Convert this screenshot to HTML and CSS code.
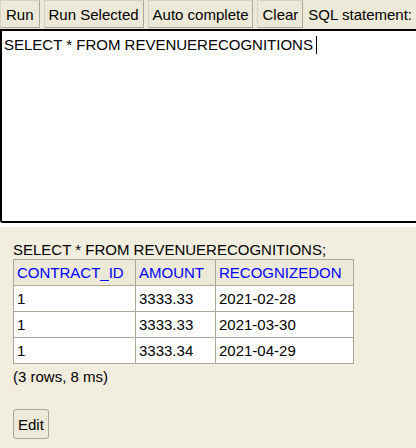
FILE: index.html
```html
<!DOCTYPE html>
<html>
<head>
<meta charset="utf-8">
<link rel="stylesheet" href="styles.css">
</head>
<body>
<div class="toolbar">
  <button class="btn">Run</button>
  <button class="btn">Run Selected</button>
  <button class="btn">Auto complete</button>
  <button class="btn">Clear</button>
  <span class="label">SQL statement:</span>
</div>
<div class="editor"><span class="sql">SELECT * FROM REVENUERECOGNITIONS</span><span class="caret"></span></div>
<div class="result">
  <div class="stmt">SELECT * FROM REVENUERECOGNITIONS;</div>
  <table class="grid">
    <tr><th class="c1">CONTRACT_ID</th><th class="c2">AMOUNT</th><th class="c3">RECOGNIZEDON</th></tr>
    <tr><td>1</td><td>3333.33</td><td>2021-02-28</td></tr>
    <tr><td>1</td><td>3333.33</td><td>2021-03-30</td></tr>
    <tr><td>1</td><td>3333.34</td><td>2021-04-29</td></tr>
  </table>
  <div class="info">(3 rows, 8 ms)</div>
  <button class="edit">Edit</button>
</div>
</body>
</html>
```
FILE: styles.css
```css
html, body {
  margin: 0;
  padding: 0;
  background: #ffffff;
  font-family: "Liberation Sans", Arial, sans-serif;
  font-size: 15px;
  color: #000;
  overflow: hidden;
}
body {
  height: 448px;
  display: flex;
  flex-direction: column;
}
.toolbar {
  display: flex;
  align-items: stretch;
  height: 29px;
  flex: none;
  background: #ece9d8;
  gap: 4px;
}
.btn {
  font-family: "Liberation Sans", Arial, sans-serif;
  font-size: 15px;
  background: #ece9d8;
  border: 1px solid #d6d2c2;
  border-right-color: #aca899;
  border-bottom-color: #aca899;
  padding: 0 4px;
  margin: 0;
  height: 28px;
  color: #000;
}
.btn:first-child {
  padding: 0 5px;
}
.label {
  display: flex;
  align-items: center;
  padding-left: 1px;
  padding-bottom: 1px;
  white-space: nowrap;
}
.editor {
  flex: none;
  height: 180px;
  border: 2px solid #000;
  border-right: none;
  border-radius: 0 0 0 3px;
  padding: 5px 4px 5px 2px;
}
.sql {
  line-height: 17px;
}
.caret {
  display: inline-block;
  width: 1px;
  height: 18px;
  background: #000;
  vertical-align: -4px;
  margin-left: 3px;
}
.result {
  flex: 1;
  margin-top: 4px;
  background: #f1eddf;
  padding: 13px 13px 0 13px;
}
.stmt {
  line-height: 19px;
}
.grid {
  border-collapse: collapse;
  border: 1px solid #aca899;
}
.grid th, .grid td {
  border: 1px solid #aca899;
  text-align: left;
  font-weight: normal;
  height: 25px;
  padding: 0 3px;
}
.grid th {
  background: #ece9d8;
  color: #0000ff;
}
.grid td {
  background: #ffffff;
}
.c1 { width: 115px; }
.c2 { width: 73px; }
.c3 { width: 131px; }
.info {
  margin-top: 3px;
  line-height: 20px;
}
.edit {
  margin-top: 22px;
  font-family: "Liberation Sans", Arial, sans-serif;
  font-size: 15px;
  background: #ece9d8;
  border: 1px solid #aca899;
  border-radius: 3px;
  padding: 0 4px;
  height: 30px;
  color: #000;
}
```
